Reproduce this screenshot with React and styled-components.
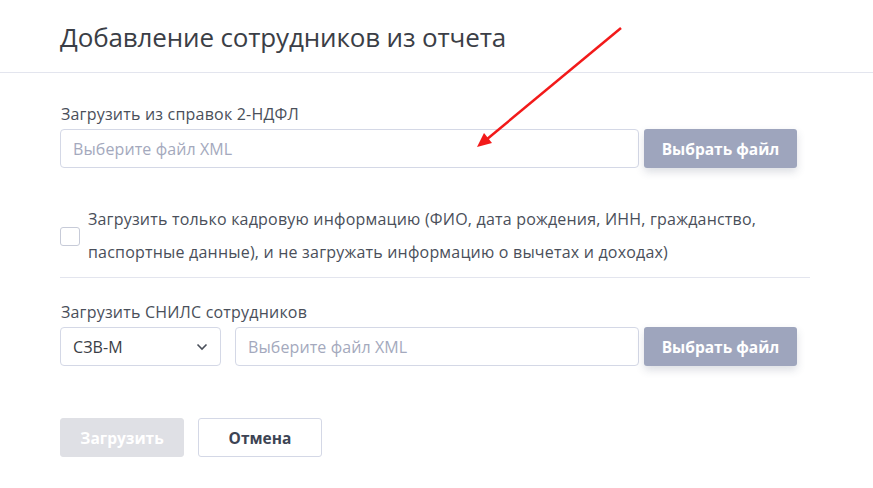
import styled, { createGlobalStyle } from 'styled-components';

const GlobalStyle = createGlobalStyle`
  body {
    margin: 0;
    background: #fff;
    font-family: 'Open Sans', 'Liberation Sans', sans-serif;
  }
`;

const Page = styled.div`
  position: relative;
  width: 873px;
  height: 488px;
  overflow: hidden;
`;

const Header = styled.header`
  height: 73px;
  padding: 0 60px;
  display: flex;
  align-items: center;
  border-bottom: 1px solid #e3e5ee;
  box-sizing: border-box;
`;

const Title = styled.h1`
  margin: 2px 0 0;
  font-size: 26px;
  line-height: 32px;
  font-weight: 400;
  letter-spacing: -0.15px;
  color: #3b3e46;
`;

const Body = styled.div`
  width: 750px;
  padding: 31px 0 0 60px;
`;

const Label = styled.div`
  font-size: 16px;
  line-height: 20px;
  letter-spacing: 0.2px;
  color: #4a4f5a;
  padding-left: 1px;
  margin-bottom: 5px;
`;

const Row = styled.div`
  display: flex;
  gap: ${(p) => p.gap || 5}px;
`;

const Field = styled.div`
  width: ${(p) => p.width}px;
  height: 39px;
  box-sizing: border-box;
  border: 1px solid #d4d8e6;
  border-radius: 4px;
  display: flex;
  align-items: center;
  padding: 0 12px;
  font-size: 16px;
  letter-spacing: 0.1px;
  color: ${(p) => (p.placeholder ? '#a4a9bd' : '#3b3e46')};
  justify-content: space-between;
`;

const FileButton = styled.button`
  width: 153px;
  height: 39px;
  border: none;
  border-radius: 3px;
  background: #9ea5bd;
  color: #fff;
  font-family: inherit;
  font-size: 15.5px;
  font-weight: 700;
  box-shadow: 0 4px 8px rgba(60, 70, 100, 0.18);
`;

const CheckRow = styled.label`
  display: flex;
  align-items: center;
  gap: 8px;
  margin-top: 35px;
  padding-bottom: 8px;
  border-bottom: 1px solid #e3e5ee;
`;

const Box = styled.span`
  flex: none;
  width: 20px;
  height: 19px;
  box-sizing: border-box;
  border: 1px solid #c7cbd8;
  border-radius: 3px;
  background: #fff;
`;

const CheckText = styled.span`
  font-size: 16px;
  line-height: 33px;
  letter-spacing: 0.2px;
  color: #4a4f5a;
`;

const Section = styled.div`
  margin-top: 24px;
`;

const Actions = styled.div`
  display: flex;
  gap: 14px;
  margin-top: 52px;
`;

const ActionButton = styled.button`
  width: 124px;
  height: 39px;
  box-sizing: border-box;
  border-radius: 3px;
  font-family: inherit;
  font-size: 15.5px;
  font-weight: 700;
  border: 1px solid ${(p) => (p.primary ? '#dfe0e5' : '#d4d8e6')};
  background: ${(p) => (p.primary ? '#dfe0e5' : '#fff')};
  color: ${(p) => (p.primary ? '#fff' : '#3d4454')};
`;

const Arrow = styled.svg`
  position: absolute;
  left: 0;
  top: 0;
  pointer-events: none;
`;

function Chevron() {
  return (
    <svg width="12" height="8" viewBox="0 0 12 8">
      <path d="M1.5 1.5 L6 6 L10.5 1.5" fill="none" stroke="#4a4f5a" strokeWidth="1.6" />
    </svg>
  );
}

export default function App() {
  return (
    <Page>
      <GlobalStyle />
      <Header>
        <Title>Добавление сотрудников из отчета</Title>
      </Header>
      <Body>
        <Label>Загрузить из справок 2-НДФЛ</Label>
        <Row>
          <Field width={579} placeholder>Выберите файл XML</Field>
          <FileButton>Выбрать файл</FileButton>
        </Row>
        <CheckRow>
          <Box />
          <CheckText>
            Загрузить только кадровую информацию (ФИО, дата рождения, ИНН, гражданство,
            паспортные данные), и не загружать информацию о вычетах и доходах)
          </CheckText>
        </CheckRow>
        <Section>
          <Label>Загрузить СНИЛС сотрудников</Label>
          <Row>
            <Field width={161}>
              СЗВ-М
              <Chevron />
            </Field>
            <Row gap={5} style={{ marginLeft: 9 }}>
              <Field width={404} placeholder>Выберите файл XML</Field>
              <FileButton>Выбрать файл</FileButton>
            </Row>
          </Row>
        </Section>
        <Actions>
          <ActionButton primary>Загрузить</ActionButton>
          <ActionButton>Отмена</ActionButton>
        </Actions>
      </Body>
      <Arrow width="873" height="488">
        <line x1="621" y1="28" x2="486" y2="140" stroke="#f21a1a" strokeWidth="2.5" />
        <polygon points="477,147 484,133 492,143" fill="#f21a1a" />
      </Arrow>
    </Page>
  );
}
